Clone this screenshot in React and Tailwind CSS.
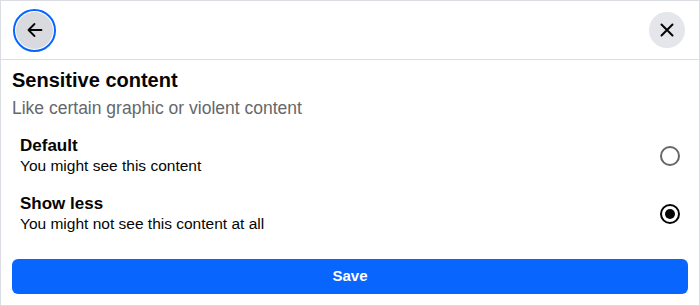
import React, { useState } from 'react';

const font = { fontFamily: '"Liberation Sans", Arial, Helvetica, sans-serif' };

const Radio = ({ checked }) => (
    <div className={`w-5 h-5 rounded-full border-2 flex items-center justify-center ${checked ? 'border-[#050505]' : 'border-[#65676b]'}`}>
        {checked && <div className="w-[10px] h-[10px] rounded-full bg-[#050505]"></div>}
    </div>
);

const App = () => {
    const [choice, setChoice] = useState('less');

    const options = [
        { id: 'default', title: 'Default', desc: 'You might see this content' },
        { id: 'less', title: 'Show less', desc: 'You might not see this content at all' },
    ];

    return (
        <div className="w-[700px] h-[306px] bg-white border border-[#dadde1] flex flex-col text-[#050505]" style={font}>
            {/* Header */}
            <div className="h-[59px] flex items-center justify-between pl-[12px] pr-[12px] border-b border-[#dadde1]">
                <div className="w-[43px] h-[43px] rounded-full border-2 border-[#0866ff] p-[1px] flex">
                    <button className="flex-1 rounded-full bg-[#d8dadf] flex items-center justify-center">
                        <svg width="20" height="20" viewBox="0 0 20 20" fill="none" stroke="#050505" strokeWidth="1.8" strokeLinecap="round" strokeLinejoin="round">
                            <path d="M16.5 10H3.5M9.5 4L3.5 10l6 6" />
                        </svg>
                    </button>
                </div>
                <button className="w-9 h-9 rounded-full bg-[#e4e6eb] flex items-center justify-center mr-[2px]">
                    <svg width="20" height="20" viewBox="0 0 20 20" fill="none" stroke="#050505" strokeWidth="2" strokeLinecap="round">
                        <path d="M4.5 4.5l11 11M15.5 4.5l-11 11" />
                    </svg>
                </button>
            </div>

            {/* Body */}
            <div className="px-[11px] pt-[8px]">
                <h2 className="text-[20px] font-bold leading-[24px]">Sensitive content</h2>
                <p className="text-[17.5px] leading-[22px] text-[#65676b] mt-[5px]">Like certain graphic or violent content</p>
            </div>

            <div className="flex flex-col mt-[16px] gap-[17px]">
                {options.map((o) => (
                    <div key={o.id} onClick={() => setChoice(o.id)} className="flex items-center justify-between pl-[19px] pr-[19px] cursor-pointer">
                        <div>
                            <div className="text-[17px] font-bold leading-[21px]">{o.title}</div>
                            <div className="text-[15.5px] leading-[20px]">{o.desc}</div>
                        </div>
                        <Radio checked={choice === o.id} />
                    </div>
                ))}
            </div>

            <div className="px-[11px] mt-auto mb-[11px]">
                <button className="w-full h-[35px] rounded-[6px] bg-[#0866ff] text-white text-[15px] font-bold">Save</button>
            </div>
        </div>
    );
};

export default App;
